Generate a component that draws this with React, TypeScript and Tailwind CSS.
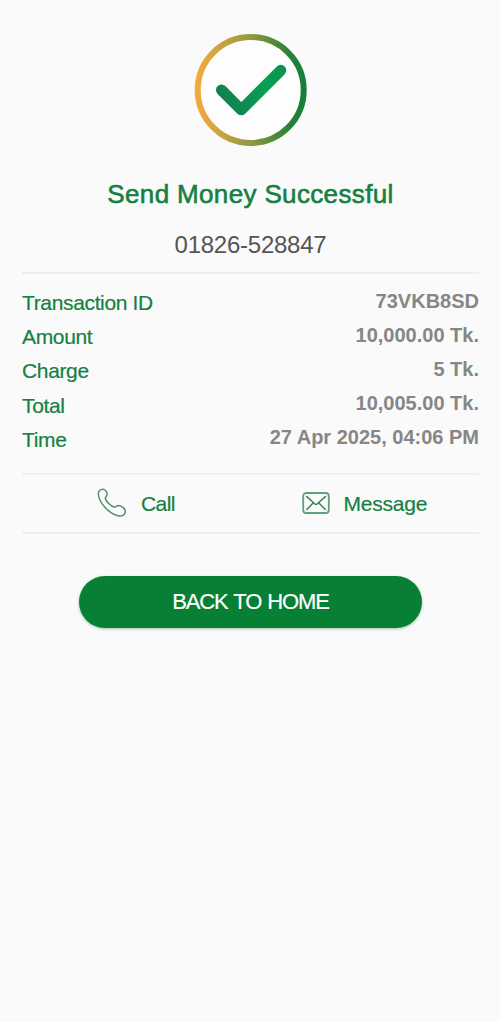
import React from "react";

const details = [
  { label: "Transaction ID", value: "73VKB8SD" },
  { label: "Amount", value: "10,000.00 Tk." },
  { label: "Charge", value: "5 Tk." },
  { label: "Total", value: "10,005.00 Tk." },
  { label: "Time", value: "27 Apr 2025, 04:06 PM" },
];

const SuccessIcon = () => (
  <svg width="113" height="112" viewBox="0 0 113 112" fill="none">
    <defs>
      <linearGradient id="ring" x1="0" y1="56" x2="112" y2="56" gradientUnits="userSpaceOnUse">
        <stop offset="0" stopColor="#f7ab3c" />
        <stop offset="0.15" stopColor="#dda63d" />
        <stop offset="0.5" stopColor="#929a3f" />
        <stop offset="0.85" stopColor="#2b8038" />
        <stop offset="1" stopColor="#128039" />
      </linearGradient>
      <linearGradient id="check" x1="30" y1="70" x2="88" y2="36" gradientUnits="userSpaceOnUse">
        <stop offset="0" stopColor="#118050" />
        <stop offset="0.65" stopColor="#08a056" />
        <stop offset="1" stopColor="#0a9452" />
      </linearGradient>
    </defs>
    <circle cx="56.7" cy="56" r="53" fill="#fdfdfd" stroke="url(#ring)" strokeWidth="6" />
    <path
      d="M27.5 56 47.3 75.8 86.8 36.3"
      stroke="url(#check)"
      strokeWidth="11"
      strokeLinecap="round"
      strokeLinejoin="round"
    />
  </svg>
);

const PhoneIcon = () => (
  <svg width="30" height="30" viewBox="0 0 30 30" fill="none" stroke="#4d9268" strokeWidth="1.5" strokeLinejoin="round">
    <path d="M1.3 6.2C1.2 3.2 3.4 1 5.8 1.2 8 1.4 9.9 3.8 10.2 6 10.4 8.1 8.2 8.6 8.3 10.2 8.5 13 14.2 18.7 17.2 19 19 19.1 19.7 17.3 21.8 17.5 24.6 17.8 28.4 20.9 28.4 23.8 28.3 26.6 25.4 28.3 22.4 28 13.4 27 2.2 15.4 1.3 6.2Z" />
  </svg>
);

const MessageIcon = () => (
  <svg width="28" height="22" viewBox="0 0 28 22" fill="none" strokeLinecap="round" strokeLinejoin="round">
    <rect x="1.2" y="1" width="25.6" height="20" rx="3" stroke="#62a17b" strokeWidth="1.8" />
    <path
      d="M4.8 4.6 12.7 11.8Q14 12.8 15.3 11.8L23.4 4.6M4.8 17.5 11.4 10.8M23.4 17.5 16.6 10.8"
      stroke="#3c8159"
      strokeWidth="1.5"
    />
  </svg>
);

export default function App() {
  return (
    <div className="flex min-h-screen flex-col bg-[#fafafa] pr-[21px] pl-[22px] font-['Liberation_Sans',Arial,sans-serif] text-[#167f42]">
      <div className="flex justify-center pt-[34px]">
        <SuccessIcon />
      </div>

      <h1 className="mt-8 text-center text-[26px] leading-8 tracking-[0.35px] [-webkit-text-stroke:0.6px_#167f42]">
        Send Money Successful
      </h1>
      <p className="mt-[19px] text-center text-2xl leading-8 tracking-[-0.25px] text-[#555457]">01826-528847</p>

      <div className="mt-[11px] flex justify-between border-y-2 border-[#eeeeee] pt-3 pb-4 text-[21px]">
        <div className="flex flex-col tracking-[-0.35px] [-webkit-text-stroke:0.2px_#167f42]">
          {details.map(({ label }) => (
            <span key={label} className="h-[34.2px] leading-[33px]">
              {label}
            </span>
          ))}
        </div>
        <div className="flex flex-col text-right text-xl font-bold text-[#868686]">
          {details.map(({ label, value }) => (
            <span key={label} className="h-[34px] leading-[30px]">
              {value}
            </span>
          ))}
        </div>
      </div>

      <div className="grid h-[59px] grid-cols-2 items-center border-b-2 border-[#eeeeee] text-[21px] [-webkit-text-stroke:0.2px_#167f42]">
        <button className="flex items-center gap-3.5 pl-[75px] tracking-[-0.6px]">
          <PhoneIcon />
          Call
        </button>
        <button className="flex items-center gap-3.5 pl-[51px] tracking-[-0.2px]">
          <MessageIcon />
          Message
        </button>
      </div>

      <button className="mt-[42px] h-[52px] w-[343px] self-center rounded-full bg-[#078035] text-[22px] tracking-[-1.1px] text-white shadow-[0_1px_3px_rgba(7,128,53,0.4)] [word-spacing:1px] [-webkit-text-stroke:0.2px_#fff]">
        BACK TO HOME
      </button>
    </div>
  );
}
